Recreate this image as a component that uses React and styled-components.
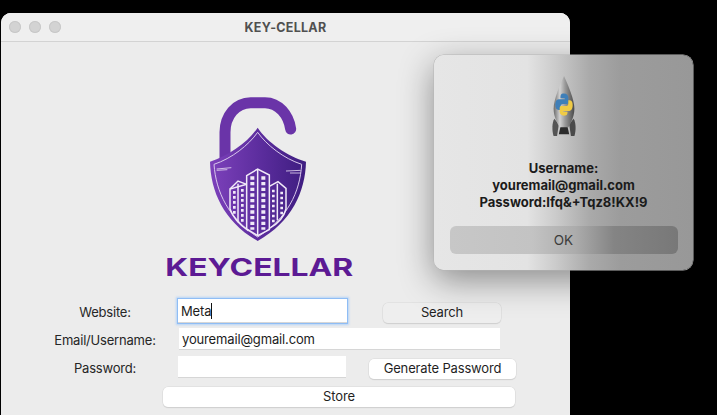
import React from 'react';
import styled, { createGlobalStyle } from 'styled-components';

const GlobalStyle = createGlobalStyle`
    html, body {
        margin: 0;
        padding: 0;
        background: #000;
        overflow: hidden;
    }
    * {
        box-sizing: border-box;
    }
`;

const Desktop = styled.div`
    position: relative;
    width: 717px;
    height: 415px;
    padding: 13px 0 0 1px;
    overflow: hidden;
    background: #000;
    font-family: Inter, "Liberation Sans", sans-serif;
`;

const Window = styled.div`
    width: 569px;
    height: 402px;
    background: #ececec;
    border-radius: 10px 10px 0 0;
    box-shadow: inset 0 1px 0 #f8f8f8;
`;

const TitleBar = styled.div`
    position: relative;
    height: 29px;
    display: flex;
    align-items: center;
    justify-content: center;
    background: #efefef;
    border-bottom: 1px solid #d3d3d3;
    border-radius: 10px 10px 0 0;
`;

const Lights = styled.div`
    position: absolute;
    left: 8px;
    top: 8px;
    display: flex;
    gap: 8px;
`;

const Light = styled.span`
    width: 12px;
    height: 12px;
    border-radius: 50%;
    background: #d3d3d3;
    box-shadow: inset 0 0 0 1px #c8c8c8;
`;

const Title = styled.div`
    font-size: 12.5px;
    font-weight: 700;
    color: #505050;
    letter-spacing: 0.25px;
`;

const LogoBox = styled.div`
    height: 257px;
    padding: 43px 0 0 149px;
`;

const Form = styled.div`
    display: flex;
    flex-direction: column;
`;

const Row = styled.div`
    display: flex;
    align-items: center;
    height: ${p => p.$height}px;
    margin-bottom: ${p => p.$gap || 0}px;
    padding-left: ${p => p.$indent || 0}px;
`;

const Label = styled.label`
    width: 108px;
    margin-left: 50px;
    padding-top: 2px;
    font-size: 13px;
    letter-spacing: -0.2px;
    color: #262626;
    white-space: nowrap;
    text-align: center;
`;

const Field = styled.div`
    width: ${p => p.$width}px;
    height: ${p => p.$height}px;
    margin-left: ${p => p.$left || 0}px;
    padding-left: 3px;
    display: flex;
    align-items: center;
    font-size: 13px;
    letter-spacing: -0.15px;
    color: #1c1c1c;
    background: #fff;
    border-bottom: 1px solid #d6d6d6;
    box-shadow: ${p => p.$focused ? '0 0 0 1px #8fbdf5, 0 0 2px 2px #b5d3f7' : 'none'};
`;

const Caret = styled.span`
    width: 1px;
    height: 16px;
    background: #111;
`;

const Button = styled.button`
    width: ${p => p.$width}px;
    height: 20px;
    margin-left: ${p => p.$left || 0}px;
    margin-top: ${p => p.$top || 0}px;
    padding: 0 0 2px;
    border: 0;
    border-radius: 5px;
    background: ${p => p.$muted ? '#eeeeee' : '#ffffff'};
    box-shadow: 0 0 0 0.5px #d8d8d8, 0 1px 1px rgba(0, 0, 0, 0.16);
    font-family: inherit;
    font-size: 13px;
    letter-spacing: -0.15px;
    color: #1f1f1f;
`;

const Dialog = styled.div`
    position: absolute;
    left: 434px;
    top: 55px;
    width: 259px;
    height: 215px;
    border-radius: 10px;
    background: linear-gradient(90deg, #e6e6e6 0%, #e3e3e3 36%, #cbcbcb 47%, #aaaaaa 60%, #9c9c9c 72%, #989898 100%);
    box-shadow: 0 0 0 0.5px #b5b5b5, 0 10px 34px rgba(0, 0, 0, 0.42);
    display: flex;
    flex-direction: column;
    align-items: center;
    padding-top: 21px;
`;

const Message = styled.div`
    margin-top: 22px;
    font-size: 13px;
    line-height: 17px;
    font-weight: 700;
    text-align: center;
    color: #1b1b1b;
`;

const OkButton = styled.div`
    width: 228px;
    height: 28px;
    margin-top: 15px;
    display: flex;
    align-items: center;
    justify-content: center;
    border-radius: 6px;
    background: linear-gradient(90deg, #c7c7c7 0%, #c3c3c3 36%, #acacac 55%, #848484 72%, #787878 100%);
    font-size: 13.5px;
    color: #3c3c3c;
`;

// padlock + shield logo, coords follow a 3x grid of the picture
const Logo = () => (
    <svg width="220" height="200" viewBox="0 0 660 600" style={{ display: 'block' }}>
        <defs>
            <linearGradient id="lockFill" x1="0" y1="0" x2="1" y2="0">
                <stop offset="0" stopColor="#7d41bb" />
                <stop offset="0.55" stopColor="#5a2c9c" />
                <stop offset="1" stopColor="#3e1d80" />
            </linearGradient>
            <linearGradient id="baseLine" x1="0" y1="0" x2="1" y2="0">
                <stop offset="0" stopColor="#8a55c0" stopOpacity="0.1" />
                <stop offset="0.5" stopColor="#8a55c0" />
                <stop offset="1" stopColor="#8a55c0" stopOpacity="0.1" />
            </linearGradient>
        </defs>
        <path d="M225 232V142C225 92 258 53 302 53H345C386 53 416 90 422 132" fill="none" stroke="#6a34a8" strokeWidth="33" strokeLinecap="round" />
        <path d="M323 128C352 172 410 212 468 230C466 320 425 410 323 468C222 410 182 320 180 230C236 212 294 172 323 128Z" fill="url(#lockFill)" />
        <path d="M323 142C350 180 400 220 455 238C450 322 412 400 323 456C236 400 198 322 192 238C246 220 296 180 323 142Z" fill="none" stroke="#d9c8ec" strokeWidth="3" />
        <path d="M200 252L244 248M200 256L232 254M408 258L452 256M420 264L452 264" stroke="#e3d6f0" strokeWidth="2.5" />
        <g fill="none" stroke="#f1eaf8" strokeWidth="4.5">
            <path d="M290 272L323 252L358 270V434L323 452L290 432Z" />
            <path d="M323 252V452" />
            <path d="M290 298L240 312V372C248 396 270 420 296 438" />
            <path d="M240 312L264 288L290 298M264 296V412" />
            <path d="M358 304L384 290L408 310V372C402 396 384 416 358 430" />
            <path d="M382 296V406" />
        </g>
        <g stroke="#f1eaf8" strokeWidth="12" strokeDasharray="10 7">
            <path d="M307 274V434" />
            <path d="M340 274V434" />
        </g>
        <g stroke="#f1eaf8" strokeWidth="8" strokeDasharray="8 7">
            <path d="M253 318V390" />
            <path d="M277 312V414" />
            <path d="M370 314V414" />
            <path d="M395 320V388" />
        </g>
        <path d="M246 467H402" stroke="url(#baseLine)" strokeWidth="5" />
        <text x="46" y="574" fontFamily="Inter, sans-serif" fontWeight="700" fontSize="73" fill="#5c1a94" textLength="564" lengthAdjust="spacingAndGlyphs">KEYCELLAR</text>
    </svg>
);

// python launcher rocket from the dialog
const RocketIcon = () => (
    <svg width="26" height="62" viewBox="0 0 30 64" preserveAspectRatio="none" style={{ display: 'block' }}>
        <defs>
            <linearGradient id="rocketBody" x1="0" y1="0" x2="1" y2="0">
                <stop offset="0" stopColor="#6a6a6a" />
                <stop offset="0.3" stopColor="#d2d2d2" />
                <stop offset="0.55" stopColor="#9a9a9a" />
                <stop offset="1" stopColor="#4a4a4a" />
            </linearGradient>
        </defs>
        <path d="M4 44C1 48 1 56 3 62H7L9 50Z" fill="#555" />
        <path d="M26 44C29 48 29 56 27 62H23L21 50Z" fill="#4a4a4a" />
        <path d="M11 52H19L21 60H9Z" fill="#2b2b2b" />
        <path d="M15 0C19 8 27 24 27 34C27 42 22 50 20 53H10C8 50 3 42 3 34C3 24 11 8 15 0Z" fill="url(#rocketBody)" />
        <path d="M15 18C11 18 11 20 11 23H16V24H9C6 24 5 27 5 30C5 33 6 35 9 35H11V32C11 30 12 29 14 29H18C20 29 20 27 20 26V22C20 20 18 18 15 18Z" fill="#3f7fb8" />
        <path d="M15 41C19 41 19 39 19 37H14V36H21C24 36 25 33 25 30C25 27 24 25 21 25H20V28C20 30 19 31 17 31H12C10 31 10 33 10 34V37C10 39 12 41 15 41Z" fill="#f0cb45" />
    </svg>
);

const App = () => (
    <>
        <GlobalStyle />
        <Desktop>
            <Window>
                <TitleBar>
                    <Lights>
                        <Light />
                        <Light />
                        <Light />
                    </Lights>
                    <Title>KEY-CELLAR</Title>
                </TitleBar>
                <LogoBox>
                    <Logo />
                </LogoBox>
                <Form>
                    <Row $height={24} $gap={5}>
                        <Label>Website:</Label>
                        <Field $left={19} $width={169} $height={24} $focused>Meta<Caret /></Field>
                        <Button $left={36} $width={118} $top={4} $muted>Search</Button>
                    </Row>
                    <Row $height={22} $gap={6}>
                        <Label>Email/Username:</Label>
                        <Field $left={20} $width={321} $height={22}>youremail@gmail.com</Field>
                    </Row>
                    <Row $height={22} $gap={9}>
                        <Label>Password:</Label>
                        <Field $left={19} $width={168} $height={22} />
                        <Button $left={23} $width={147} $top={4}>Generate Password</Button>
                    </Row>
                    <Row $height={20} $indent={162}>
                        <Button $width={352}>Store</Button>
                    </Row>
                </Form>
            </Window>
            <Dialog>
                <RocketIcon />
                <Message>
                    Username:<br />
                    youremail@gmail.com<br />
                    Password:Ifq&amp;+Tqz8!KX!9
                </Message>
                <OkButton>OK</OkButton>
            </Dialog>
        </Desktop>
    </>
);

export default App;
